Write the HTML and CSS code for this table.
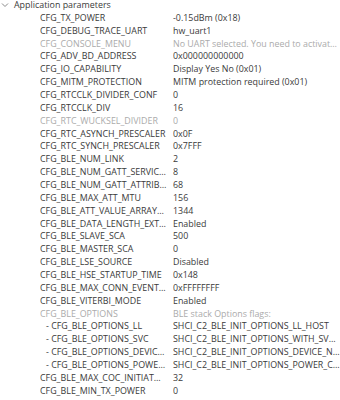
FILE: index.html
```html
<!DOCTYPE html>
<html>
<head>
<meta charset="utf-8">
<link rel="stylesheet" href="styles.css">
</head>
<body>
<div class="tree">
  <div class="group">
    <svg class="chev" width="8" height="6" viewBox="0 0 8 6"><path d="M1 1.5 L4 4.5 L7 1.5" fill="none" stroke="#8a8a8a" stroke-width="1"/></svg>
    <span>Application parameters</span>
  </div>
  <div class="row"><span class="name">CFG_TX_POWER</span><span class="val">-0.15dBm (0x18)</span></div>
  <div class="row"><span class="name">CFG_DEBUG_TRACE_UART</span><span class="val">hw_uart1</span></div>
  <div class="row dis"><span class="name">CFG_CONSOLE_MENU</span><span class="val">No UART selected. You need to activate a UART first</span></div>
  <div class="row"><span class="name">CFG_ADV_BD_ADDRESS</span><span class="val">0x000000000000</span></div>
  <div class="row"><span class="name">CFG_IO_CAPABILITY</span><span class="val">Display Yes No (0x01)</span></div>
  <div class="row"><span class="name">CFG_MITM_PROTECTION</span><span class="val">MITM protection required (0x01)</span></div>
  <div class="row"><span class="name">CFG_RTCCLK_DIVIDER_CONF</span><span class="val">0</span></div>
  <div class="row"><span class="name">CFG_RTCCLK_DIV</span><span class="val">16</span></div>
  <div class="row dis"><span class="name">CFG_RTC_WUCKSEL_DIVIDER</span><span class="val">0</span></div>
  <div class="row"><span class="name">CFG_RTC_ASYNCH_PRESCALER</span><span class="val">0x0F</span></div>
  <div class="row"><span class="name">CFG_RTC_SYNCH_PRESCALER</span><span class="val">0x7FFF</span></div>
  <div class="row"><span class="name">CFG_BLE_NUM_LINK</span><span class="val">2</span></div>
  <div class="row"><span class="name">CFG_BLE_NUM_GATT_SERVICES</span><span class="val">8</span></div>
  <div class="row"><span class="name">CFG_BLE_NUM_GATT_ATTRIBUTES</span><span class="val">68</span></div>
  <div class="row"><span class="name">CFG_BLE_MAX_ATT_MTU</span><span class="val">156</span></div>
  <div class="row"><span class="name">CFG_BLE_ATT_VALUE_ARRAY_SIZE</span><span class="val">1344</span></div>
  <div class="row"><span class="name">CFG_BLE_DATA_LENGTH_EXTENSION</span><span class="val">Enabled</span></div>
  <div class="row"><span class="name">CFG_BLE_SLAVE_SCA</span><span class="val">500</span></div>
  <div class="row"><span class="name">CFG_BLE_MASTER_SCA</span><span class="val">0</span></div>
  <div class="row"><span class="name">CFG_BLE_LSE_SOURCE</span><span class="val">Disabled</span></div>
  <div class="row"><span class="name">CFG_BLE_HSE_STARTUP_TIME</span><span class="val">0x148</span></div>
  <div class="row"><span class="name">CFG_BLE_MAX_CONN_EVENT_LENGTH</span><span class="val">0xFFFFFFFF</span></div>
  <div class="row"><span class="name">CFG_BLE_VITERBI_MODE</span><span class="val">Enabled</span></div>
  <div class="row dis"><span class="name">CFG_BLE_OPTIONS</span><span class="val">BLE stack Options flags:</span></div>
  <div class="row sub"><span class="name">- CFG_BLE_OPTIONS_LL</span><span class="val">SHCI_C2_BLE_INIT_OPTIONS_LL_HOST</span></div>
  <div class="row sub"><span class="name">- CFG_BLE_OPTIONS_SVC</span><span class="val">SHCI_C2_BLE_INIT_OPTIONS_WITH_SVC_CHANGE_DESC</span></div>
  <div class="row sub"><span class="name">- CFG_BLE_OPTIONS_DEVICE_NAME</span><span class="val">SHCI_C2_BLE_INIT_OPTIONS_DEVICE_NAME_RW</span></div>
  <div class="row sub"><span class="name">- CFG_BLE_OPTIONS_POWER_CLASS</span><span class="val">SHCI_C2_BLE_INIT_OPTIONS_POWER_CLASS_2_3</span></div>
  <div class="row"><span class="name">CFG_BLE_MAX_COC_INITIATOR_NBR</span><span class="val">32</span></div>
  <div class="row"><span class="name">CFG_BLE_MIN_TX_POWER</span><span class="val">0</span></div>
</div>
</body>
</html>
```

FILE: styles.css
```css
html, body {
  margin: 0;
  padding: 0;
  background: #ffffff;
  overflow: hidden;
}
body {
  width: 340px;
  height: 400px;
  font-family: "Open Sans", "Noto Sans", sans-serif;
  font-size: 8.9px;
  color: #3a3a3a;
}
.tree {
  margin-top: -1px;
  display: flex;
  flex-direction: column;
}
.group {
  height: 12.86px;
  line-height: 12.86px;
  display: flex;
  align-items: center;
  padding-left: 1px;
  gap: 5px;
  white-space: nowrap;
}
.chev {
  flex: none;
}
.row {
  height: 12.86px;
  line-height: 12.86px;
  display: grid;
  grid-template-columns: 127px 168px;
  column-gap: 6px;
  padding-left: 40px;
  white-space: nowrap;
}
.name, .val {
  overflow: hidden;
  text-overflow: ellipsis;
}
.sub .name {
  padding-left: 6px;
}
.dis {
  color: #ababab;
}
```
